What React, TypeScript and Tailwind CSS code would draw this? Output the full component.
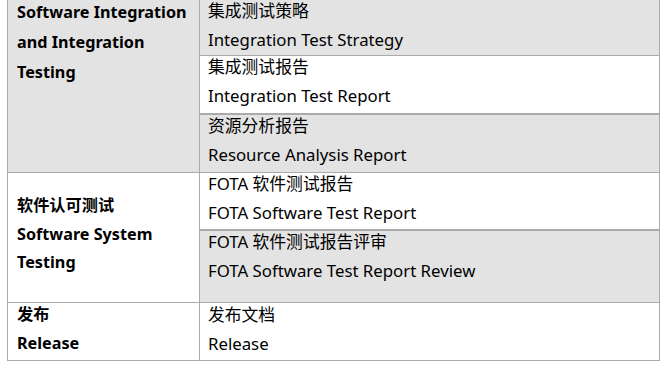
import { FunctionComponent, ReactNode } from "react"

const font = { fontFamily: '"Noto Sans", "Noto Sans CJK SC", sans-serif' }

const Cell: FunctionComponent<{ className: string; lines: string[] }> = ({ className, lines }) => (
  <div className={`pl-2 ${className}`}>
    <div className="-mt-[4px] text-[16.8px] leading-[29px] text-black">
      {lines.map((line) => (
        <div key={line} className="whitespace-nowrap">
          {line}
        </div>
      ))}
    </div>
  </div>
)

const Group: FunctionComponent<{ left: ReactNode; leftClass: string; children: ReactNode; className?: string }> = ({
  left,
  leftClass,
  children,
  className = "",
}) => (
  <div className={`flex border-b border-[#aaaaaa] ${className}`}>
    <div className={`w-[192px] shrink-0 border-r border-[#aaaaaa] pl-[9px] ${leftClass}`}>{left}</div>
    <div className="flex min-w-0 flex-1 flex-col">{children}</div>
  </div>
)

export default function App() {
  return (
    <div className="h-[366px] w-[667px] overflow-hidden bg-white" style={font}>
      <div className="ml-[7px] w-[653px] border-x border-[#aaaaaa]">
        <Group
          leftClass="bg-[#e3e3e3]"
          left={
            <div className="-mt-[3px] text-[16.2px] font-bold leading-[30px] text-black">
              <div>Software Integration</div>
              <div>and Integration</div>
              <div>Testing</div>
            </div>
          }
        >
          <Cell className="h-[56px] border-b border-[#aaaaaa] bg-[#e3e3e3]" lines={["集成测试策略", "Integration Test Strategy"]} />
          <Cell className="h-[59px] border-b-2 border-[#aaaaaa] bg-white" lines={["集成测试报告", "Integration Test Report"]} />
          <Cell className="h-[57px] bg-[#e3e3e3]" lines={["资源分析报告", "Resource Analysis Report"]} />
        </Group>
        <Group
          leftClass="bg-white pt-[19px]"
          left={
            <div className="-mt-[1px] text-[16.2px] font-bold leading-[28.5px] text-black">
              <div>软件认可测试</div>
              <div>Software System</div>
              <div>Testing</div>
            </div>
          }
        >
          <Cell className="h-[58px] border-b-2 border-[#aaaaaa] bg-white" lines={["FOTA 软件测试报告", "FOTA Software Test Report"]} />
          <Cell className="h-[71px] bg-[#e3e3e3]" lines={["FOTA 软件测试报告评审", "FOTA Software Test Report Review"]} />
        </Group>
        <Group
          leftClass="bg-white"
          left={
            <div className="-mt-[3px] text-[16.2px] font-bold leading-[29px] text-black">
              <div>发布</div>
              <div>Release</div>
            </div>
          }
        >
          <div className="h-[57px] bg-white pl-2">
            <div className="-mt-[3px] text-[16.8px] leading-[29px] text-black">
              <div>发布文档</div>
              <div>Release</div>
            </div>
          </div>
        </Group>
      </div>
    </div>
  )
}
